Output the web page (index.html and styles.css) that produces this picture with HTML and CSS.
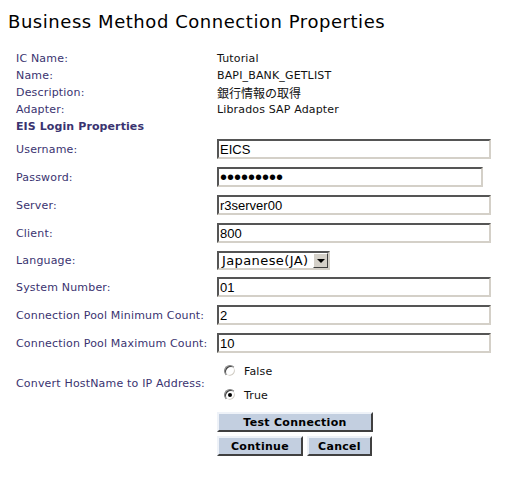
FILE: index.html
```html
<!DOCTYPE html>
<html>
<head>
<meta charset="utf-8">
<link rel="stylesheet" href="styles.css">
</head>
<body>
<h1 class="title">Business Method Connection Properties</h1>
<div class="info">
  <div class="lbl">IC Name:</div><div class="val">Tutorial</div>
  <div class="lbl">Name:</div><div class="val">BAPI_BANK_GETLIST</div>
  <div class="lbl">Description:</div><div class="val cjk">銀行情報の取得</div>
  <div class="lbl">Adapter:</div><div class="val">Librados SAP Adapter</div>
  <div class="lbl section">EIS Login Properties</div><div></div>
</div>
<div class="form">
  <div class="row"><div class="lbl">Username:</div><div class="field"><input class="text" type="text" value="EICS"></div></div>
  <div class="row"><div class="lbl">Password:</div><div class="field"><input class="text pw" type="password" value="abcdefghi"></div></div>
  <div class="row"><div class="lbl">Server:</div><div class="field"><input class="text" type="text" value="r3server00"></div></div>
  <div class="row"><div class="lbl">Client:</div><div class="field"><input class="text" type="text" value="800"></div></div>
  <div class="row lang"><div class="lbl">Language:</div><div class="field">
    <div class="select"><span class="sel-text">Japanese(JA)</span><span class="sel-btn"><span class="tri"></span></span></div>
  </div></div>
  <div class="row"><div class="lbl">System Number:</div><div class="field"><input class="text" type="text" value="01"></div></div>
  <div class="row"><div class="lbl">Connection Pool Minimum Count:</div><div class="field"><input class="text" type="text" value="2"></div></div>
  <div class="row"><div class="lbl">Connection Pool Maximum Count:</div><div class="field"><input class="text" type="text" value="10"></div></div>
  <div class="row radios"><div class="lbl">Convert HostName to IP Address:</div><div class="field">
    <label class="opt"><span class="radio"></span>False</label>
    <label class="opt"><span class="radio on"></span>True</label>
  </div></div>
  <div class="actions">
    <div class="btn-row"><button class="btn wide">Test Connection</button></div>
    <div class="btn-row"><button class="btn cont">Continue</button><button class="btn canc">Cancel</button></div>
  </div>
</div>
</body>
</html>
```
FILE: styles.css
```css
html, body {
  margin: 0;
  padding: 0;
  background: #fff;
}
body {
  font-family: "DejaVu Sans", Verdana, sans-serif;
  font-size: 11px;
  color: #000;
}
.title {
  font-size: 18px;
  font-weight: normal;
  line-height: 22px;
  letter-spacing: 0.55px;
  margin: 11px 0 0 8px;
  color: #000;
}
.info {
  display: grid;
  grid-template-columns: 201px 1fr;
  grid-auto-rows: 17px;
  padding: 17px 0 0 16px;
  align-items: center;
}
.lbl {
  color: #3a3370;
  white-space: nowrap;
  letter-spacing: 0.18px;
}
.section {
  font-weight: bold;
  letter-spacing: 0.1px;
}
.val {
  color: #111;
  letter-spacing: 0.15px;
}
.cjk {
  font-family: "Noto Sans CJK JP", "DejaVu Sans", sans-serif;
  font-size: 12px;
  letter-spacing: 0;
}
.form {
  padding-left: 16px;
}
.row {
  display: grid;
  grid-template-columns: 201px 1fr;
  height: 28px;
  align-items: center;
}
.row.lang {
  height: 26px;
}
.text {
  box-sizing: border-box;
  width: 274px;
  height: 20px;
  margin: 0;
  padding: 0 1px;
  border: 2px solid;
  border-color: #555 #d4d0c8 #d4d0c8 #555;
  font-family: "Liberation Sans", Arial, sans-serif;
  font-size: 13px;
  color: #000;
  background: #fff;
  outline: none;
}
.text.pw {
  width: 266px;
  font-size: 20px;
  line-height: 16px;
  padding-top: 0;
  padding-bottom: 0;
}
.select {
  box-sizing: border-box;
  width: 113px;
  height: 19px;
  border: 2px solid;
  border-color: #555 #d4d0c8 #d4d0c8 #555;
  display: flex;
  align-items: center;
  justify-content: space-between;
  background: #fff;
}
.sel-text {
  font-family: "DejaVu Sans", Verdana, sans-serif;
  font-size: 13px;
  letter-spacing: 0.4px;
  padding-left: 3px;
  line-height: 15px;
}
.sel-btn {
  box-sizing: border-box;
  width: 15px;
  height: 15px;
  background: #d4d0c8;
  border: 1px solid;
  border-color: #fff #404040 #404040 #fff;
  display: flex;
  align-items: center;
  justify-content: center;
}
.tri {
  width: 0;
  height: 0;
  border-left: 4px solid transparent;
  border-right: 4px solid transparent;
  border-top: 4px solid #000;
  margin-top: 1px;
}
.row.radios {
  height: 48px;
  margin-top: 2px;
}
.field .opt {
  display: flex;
  align-items: center;
  height: 24px;
  color: #111;
  letter-spacing: 0.15px;
}
.radio {
  box-sizing: border-box;
  width: 12px;
  height: 12px;
  border-radius: 50%;
  border: 1px solid;
  border-color: #808080 #fff #fff #808080;
  box-shadow: inset 1px 1px 0 #404040, inset -1px -1px 0 #d4d0c8;
  background: #fff;
  margin: 0 8px 0 7px;
  position: relative;
}
.radio.on::after {
  content: "";
  position: absolute;
  left: 3px;
  top: 3px;
  width: 4px;
  height: 4px;
  border-radius: 50%;
  background: #000;
}
.actions {
  padding: 5px 0 0 201px;
  display: flex;
  flex-direction: column;
  gap: 4px;
}
.btn-row {
  display: flex;
  gap: 4px;
}
.btn {
  box-sizing: border-box;
  height: 20px;
  margin: 0;
  padding: 0;
  background: #c3cfe0;
  border: 2px solid;
  border-color: #eef2f8 #404040 #404040 #eef2f8;
  font-family: "DejaVu Sans", Verdana, sans-serif;
  font-size: 11px;
  font-weight: bold;
  letter-spacing: 0.3px;
  color: #000;
}
.btn.wide { width: 156px; }
.btn.cont { width: 86px; }
.btn.canc { width: 65px; }
```
